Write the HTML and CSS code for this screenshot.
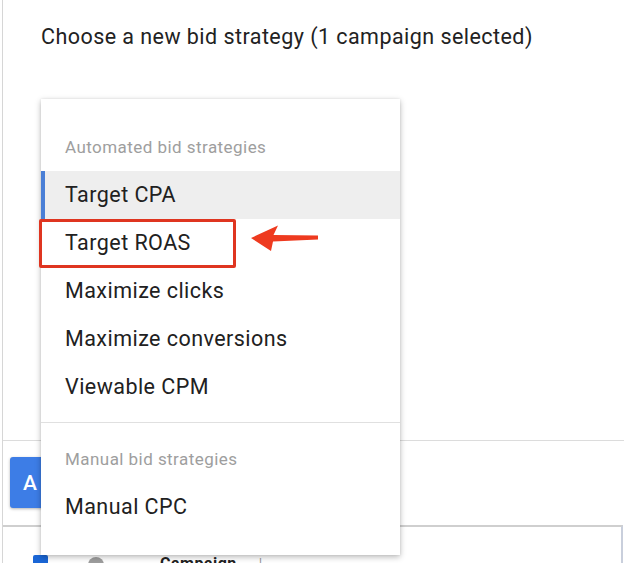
FILE: index.html
```html
<!DOCTYPE html>
<html>
<head>
<meta charset="utf-8">
<link rel="stylesheet" href="styles.css">
</head>
<body>
<div class="page">
  <section class="head">
    <h1 class="title">Choose a new bid strategy (1 campaign selected)</h1>
  </section>
  <section class="actions">
    <button class="apply">A</button>
  </section>
  <section class="table">
    <div class="thead">
      <span class="check"></span>
      <span class="dot"></span>
      <span class="col">Campaign</span>
      <span class="sep">|</span>
    </div>
  </section>

  <div class="menu">
    <div class="group">
      <div class="group-label">Automated bid strategies</div>
      <div class="item active">Target CPA</div>
      <div class="item">Target ROAS</div>
      <div class="item">Maximize clicks</div>
      <div class="item">Maximize conversions</div>
      <div class="item">Viewable CPM</div>
    </div>
    <div class="group last">
      <div class="group-label">Manual bid strategies</div>
      <div class="item">Manual CPC</div>
    </div>
  </div>

  <div class="highlight"></div>
  <svg class="arrow" width="80" height="34" viewBox="0 0 80 34">
    <polygon points="2,14 29,1.5 24.5,11 69,11.5 69,15.5 24,17.5 22,27" fill="#ee3a1f"/>
  </svg>
</div>
</body>
</html>
```
FILE: styles.css
```css
* { box-sizing: border-box; }
html, body { margin: 0; padding: 0; background: #fff; }
body {
  font-family: Roboto, "Noto Sans", "Liberation Sans", sans-serif;
  color: #212121;
  width: 624px;
  height: 563px;
  overflow: hidden;
}
.page {
  position: relative;
  margin-left: 2px;
  border-left: 1px solid #d6d6d6;
  height: 563px;
}
.head {
  height: 441px;
  border-bottom: 1px solid #dcdcdc;
  padding: 24px 0 0 38px;
}
.title {
  margin: 0;
  font-size: 21.5px;
  letter-spacing: 0.45px;
  line-height: 25px;
  font-weight: 400;
  color: #222;
}
.actions {
  height: 84px;
  padding: 16px 0 0 7px;
}
.apply {
  width: 90px;
  height: 51px;
  border: none;
  border-radius: 3px;
  background: #3d7de6;
  color: #fff;
  font-family: Roboto, sans-serif;
  font-size: 21px;
  font-weight: 500;
  text-align: left;
  padding: 0 0 0 13px;
  box-shadow: 0 1px 3px rgba(0,0,0,0.3);
}
.table {
  height: 38px;
  border-top: 2px solid #cfcfcf;
  border-right: 2px solid #c9cfdc;
  margin-right: 1px;
}
.thead {
  display: flex;
  align-items: flex-start;
  padding: 28px 0 0 30px;
}
.check {
  width: 15px;
  height: 15px;
  background: #1a66d6;
  border-radius: 2px;
}
.dot {
  width: 16px;
  height: 16px;
  margin: 2px 0 0 40px;
  border-radius: 50%;
  background: #9e9e9e;
}
.col {
  margin: -1px 0 0 56px;
  font-size: 16px;
  font-weight: 700;
  line-height: 20px;
  letter-spacing: 0.5px;
  color: #222;
}
.sep {
  margin: -1px 0 0 22px;
  color: #999;
  font-size: 14px;
  line-height: 20px;
}
.menu {
  position: absolute;
  left: 38px;
  top: 99px;
  width: 359px;
  background: #fff;
  padding: 24px 0;
  box-shadow: 0 2px 6px rgba(0,0,0,0.28), 0 0 2px rgba(0,0,0,0.08);
  z-index: 2;
}
.group { padding-bottom: 11px; border-bottom: 1px solid #e0e0e0; }
.group.last { padding-top: 12px; padding-bottom: 0; border-bottom: none; }
.group-label {
  height: 48px;
  line-height: 48px;
  padding-left: 24px;
  font-size: 17px;
  letter-spacing: 0.45px;
  color: #9e9e9e;
}
.item {
  height: 48px;
  line-height: 48px;
  padding-left: 24px;
  font-size: 21.5px;
  letter-spacing: 0.45px;
  color: #212121;
}
.item.active {
  background: #eeeeee;
  box-shadow: inset 4px 0 0 #4a7fd6;
}
.highlight {
  position: absolute;
  left: 36px;
  top: 219px;
  width: 197px;
  height: 49px;
  border: 3px solid #df3520;
  border-radius: 2px;
  z-index: 3;
}
.arrow {
  position: absolute;
  left: 246px;
  top: 224px;
  z-index: 3;
}
```
